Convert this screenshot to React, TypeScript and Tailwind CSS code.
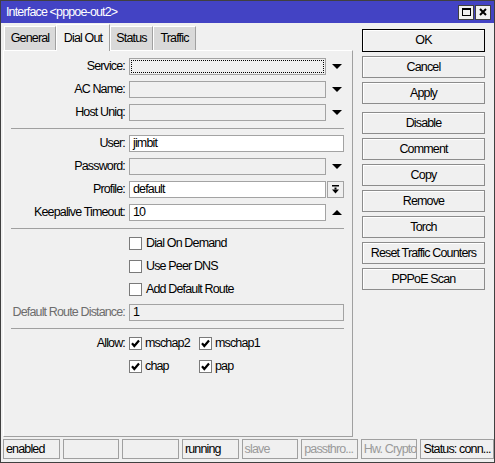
import React from 'react';

const Arrow = ({ up = false }: { up?: boolean }) => (
  <svg width="10" height="5" viewBox="0 0 10 5" className="ml-[6px]">
    <path d={up ? 'M0 5H10L5 0Z' : 'M0 0H10L5 5Z'} fill="#000" />
  </svg>
);

const Check = ({ checked = false }: { checked?: boolean }) => (
  <div className="w-[13px] h-[13px] border border-[#7a7a7a] bg-white flex items-center justify-center shrink-0">
    {checked && (
      <svg width="11" height="11" viewBox="0 0 11 11">
        <path d="M2 5.3L4.3 8L9 2.5" stroke="#000" strokeWidth="2.2" fill="none" />
      </svg>
    )}
  </div>
);

const Field = ({ value = '', white = false, wide = false, focus = false }: { value?: string; white?: boolean; wide?: boolean; focus?: boolean }) => (
  <div
    className={`${wide ? 'w-[215px]' : 'w-[197px]'} h-[17px] border border-[#a3a3a3] ${white ? 'bg-white' : 'bg-[#f0f0f0]'} flex items-center p-[1px]`}
  >
    <div className={`flex-1 h-full px-[2px] leading-[13px] ${focus ? 'border border-dotted border-black' : ''}`}>{value}</div>
  </div>
);

const Row = ({ label, gray = false, children }: { label: string; gray?: boolean; children: React.ReactNode }) => (
  <div className="flex items-center h-[23px]">
    <div className={`w-[121px] text-right whitespace-nowrap ${gray ? 'text-[#6d6d6d]' : ''}`}>{label}</div>
    <div className="ml-[4px] flex items-center">{children}</div>
  </div>
);

const Sep = () => (
  <div className="h-[8px] flex items-center pl-[7px]">
    <div className="w-[333px] h-px bg-[#a0a0a0]" />
  </div>
);

const CheckRow = ({ label }: { label: string }) => (
  <div className="flex items-center h-[23px] pl-[125px]">
    <Check />
    <span className="ml-[4px]">{label}</span>
  </div>
);

const Btn = ({ label, primary = false }: { label: string; primary?: boolean }) => (
  <div
    className={`${primary ? 'h-[23px] border-black' : 'h-[22px] border-[#8c8c8c]'} border bg-[#f0f0f0] shadow-[inset_1px_1px_0_#fff] flex items-center justify-center whitespace-nowrap`}
  >
    {label}
  </div>
);

const tabs = [
  { name: 'General', w: 'w-[52px]' },
  { name: 'Dial Out', w: 'w-[54px]', active: true },
  { name: 'Status', w: 'w-[43px]' },
  { name: 'Traffic', w: 'w-[43px]' },
];

const status = [
  { t: 'enabled' },
  { t: '' },
  { t: '' },
  { t: 'running' },
  { t: 'slave', gray: true },
  { t: 'passthro...', gray: true },
  { t: 'Hw. Crypto', gray: true },
  { t: 'Status: conn...', wide: true },
];

export default function App() {
  return (
    <div className="w-[495px] h-[463px] bg-[#f0f0f0] border border-[#404040] flex flex-col overflow-hidden text-[12.5px] tracking-[-0.85px] text-black font-['Liberation_Sans',Arial,sans-serif]">
      {/* title bar */}
      <div className="h-[22px] bg-[#4343c4] flex items-center justify-between pl-[5px] pr-[3px] shrink-0">
        <span className="text-white">Interface &lt;pppoe-out2&gt;</span>
        <div className="flex gap-[1px]">
          <div className="w-[16px] h-[15px] bg-[#f0f0f0] border border-[#404040] flex items-center justify-center">
            <div className="w-[9px] h-[8px] border border-black border-t-2" />
          </div>
          <div className="w-[16px] h-[15px] bg-[#f0f0f0] border border-[#404040] flex items-center justify-center">
            <svg width="8" height="8" viewBox="0 0 8 8">
              <path d="M1 1L7 7M7 1L1 7" stroke="#000" strokeWidth="2" />
            </svg>
          </div>
        </div>
      </div>

      <div className="flex flex-1 min-h-0">
        {/* left side */}
        <div className="w-[350px] ml-[2px] flex flex-col">
          <div className="h-[27px] flex items-end pl-[1px]">
            {tabs.map((t) =>
              t.active ? (
                <div
                  key={t.name}
                  className={`${t.w} h-[27px] -mb-px relative z-10 bg-[#f0f0f0] border-t border-l border-r border-t-white border-l-white border-r-[#a0a0a0] flex items-center justify-center`}
                >
                  {t.name}
                </div>
              ) : (
                <div
                  key={t.name}
                  className={`${t.w} h-[24px] bg-[#d9d9d9] border-t border-l border-r border-t-white border-l-white border-r-[#a0a0a0] flex items-center justify-center`}
                >
                  {t.name}
                </div>
              )
            )}
          </div>
          <div className="flex-1 border border-t-white border-l-white border-r-[#a0a0a0] border-b-[#a0a0a0] pt-[4px]">
            <Row label="Service:">
              <Field focus />
              <Arrow />
            </Row>
            <Row label="AC Name:">
              <Field />
              <Arrow />
            </Row>
            <Row label="Host Uniq:">
              <Field />
              <Arrow />
            </Row>
            <Sep />
            <Row label="User:">
              <Field value="jimbit" white wide />
            </Row>
            <Row label="Password:">
              <Field />
              <Arrow />
            </Row>
            <Row label="Profile:">
              <Field value="default" white />
              <div className="ml-[1px] w-[17px] h-[17px] border border-[#a3a3a3] bg-[#f0f0f0] flex items-center justify-center">
                <svg width="9" height="9" viewBox="0 0 9 9">
                  <rect x="1" y="0" width="7" height="1.5" fill="#000" />
                  <rect x="3.5" y="2.5" width="2" height="2" fill="#000" />
                  <path d="M1 4.5H8L4.5 8.5Z" fill="#000" />
                </svg>
              </div>
            </Row>
            <Row label="Keepalive Timeout:">
              <Field value="10" white />
              <Arrow up />
            </Row>
            <Sep />
            <CheckRow label="Dial On Demand" />
            <CheckRow label="Use Peer DNS" />
            <CheckRow label="Add Default Route" />
            <Row label="Default Route Distance:" gray>
              <Field value="1" wide />
            </Row>
            <Sep />
            <Row label="Allow:">
              <div className="w-[70px] flex items-center">
                <Check checked />
                <span className="ml-[3px]">mschap2</span>
              </div>
              <Check checked />
              <span className="ml-[3px]">mschap1</span>
            </Row>
            <Row label="">
              <div className="w-[70px] flex items-center">
                <Check checked />
                <span className="ml-[3px]">chap</span>
              </div>
              <Check checked />
              <span className="ml-[3px]">pap</span>
            </Row>
          </div>
        </div>

        {/* right buttons */}
        <div className="ml-[9px] w-[123px] pt-[6px] flex flex-col">
          <Btn label="OK" primary />
          <div className="mt-[4px] flex flex-col gap-[4px]">
            <Btn label="Cancel" />
            <Btn label="Apply" />
          </div>
          <div className="mt-[8px] flex flex-col gap-[4px]">
            {['Disable', 'Comment', 'Copy', 'Remove', 'Torch', 'Reset Traffic Counters', 'PPPoE Scan'].map((b) => (
              <Btn key={b} label={b} />
            ))}
          </div>
        </div>
      </div>

      {/* status bar */}
      <div className="h-[25px] shrink-0 flex items-start pt-[2px] pl-[2px] gap-[3px]">
        {status.map((s, i) => (
          <div
            key={i}
            className={`${s.wide ? 'w-[74px]' : 'w-[57px]'} h-[20px] border border-[#a0a0a0] px-[2px] flex items-center whitespace-nowrap overflow-hidden ${s.gray ? 'text-[#9a9a9a]' : ''}`}
          >
            {s.t}
          </div>
        ))}
      </div>
    </div>
  );
}
